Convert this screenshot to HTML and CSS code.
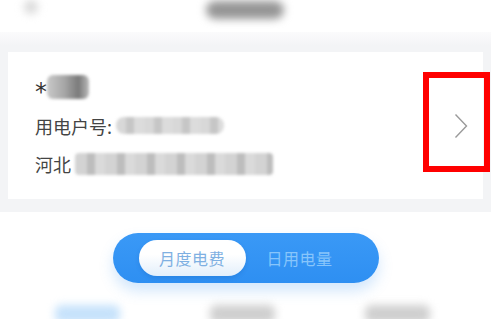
FILE: index.html
```html
<!DOCTYPE html>
<html lang="zh">
<head>
<meta charset="utf-8">
<link rel="stylesheet" href="styles.css">
</head>
<body>
<div class="page">
  <header class="topbar">
    <span class="back blur"></span>
    <span class="title blur"></span>
  </header>
  <section class="graybg">
    <div class="card">
      <div class="info">
        <div class="row"><span class="txt star">*</span><span class="mask m-name"></span></div>
        <div class="row"><span class="txt">用电户号:</span><span class="mask m-no"></span></div>
        <div class="row"><span class="txt">河北</span><span class="mask m-addr"></span></div>
      </div>
      <svg class="chev" width="14" height="26" viewBox="0 0 14 26"><path d="M1.5 1.5 L12.5 13 L1.5 24.5" fill="none" stroke="#9a9a9a" stroke-width="1.4"/></svg>
    </div>
    <div class="redbox"></div>
  </section>
  <section class="toggle-wrap">
    <div class="toggle">
      <span class="opt active">月度电费</span>
      <span class="opt">日用电量</span>
    </div>
  </section>
  <nav class="tabs">
    <span class="tab blue blur"></span>
    <span class="tab gray blur"></span>
    <span class="tab gray blur"></span>
  </nav>
</div>
</body>
</html>
```
FILE: styles.css
```css
html, body { margin: 0; padding: 0; background: #fff; }
body { width: 491px; height: 319px; overflow: hidden; font-family: "Noto Sans CJK SC", "Noto Sans", sans-serif; }
.page { position: relative; width: 491px; height: 319px; }
.topbar { height: 32px; position: relative; background: #fff; }
.blur { filter: blur(4px); }
.back { position: absolute; left: 24px; top: 0; width: 14px; height: 14px; background: #d8d8d8; border-radius: 7px; }
.title { position: absolute; left: 206px; top: 1px; width: 78px; height: 18px; background: #959595; border-radius: 9px; }
.graybg { position: relative; background: linear-gradient(#fbfbfc 0, #f3f4f6 14px, #f3f4f6 100%); padding: 20px 8px 13px; }
.card { background: #fff; height: 147px; display: flex; align-items: center; justify-content: space-between; padding: 0 15px 0 27px; box-sizing: border-box; }
.info { display: flex; flex-direction: column; }
.row { height: 38.5px; display: flex; align-items: center; color: #444; font-size: 18px; }
.star { font-family: "DejaVu Sans", sans-serif; font-size: 24px; line-height: 1; margin-top: 10px; color: #333; }
.mask { display: inline-block; height: 17px; border-radius: 8px; filter: blur(1.5px); margin-left: 4px; }
.m-name { width: 42px; height: 24px; background: linear-gradient(90deg, #c8c8c8, #a8a8a8 40%, #7a7a7a 75%, #bbb); border-radius: 6px; margin-left: 0; }
.m-no { width: 108px; background: repeating-linear-gradient(90deg, #d8d8d8 0 10px, #c6c6c6 10px 18px, #dcdcdc 18px 28px); }
.m-addr { width: 198px; height: 22px; border-radius: 4px; background: repeating-linear-gradient(90deg, #d3d3d3 0 12px, #bdbdbd 12px 20px, #dadada 20px 30px); }
.chev { margin-top: 1px; }
.redbox { position: absolute; left: 423px; top: 40px; width: 55px; height: 88px; border: 6px solid #ff0000; }
.toggle-wrap { display: flex; justify-content: center; padding-top: 21px; }
.toggle { width: 266px; height: 50px; border-radius: 25px; background: linear-gradient(#3a99f6, #2e8ff2); box-shadow: 0 8px 14px rgba(80, 160, 245, 0.25); display: flex; align-items: center; padding-left: 26px; box-sizing: border-box; gap: 21px; }
.opt { font-size: 16px; color: #87c5fb; letter-spacing: 0.5px; }
.opt.active { width: 107px; height: 36px; border-radius: 18px; background: linear-gradient(#ffffff 40%, #e3effb); color: #7fb0e2; display: flex; align-items: center; justify-content: center; box-shadow: 0 2px 4px rgba(0, 60, 140, 0.15); }
.tabs { display: flex; justify-content: space-between; padding: 22px 61px 0 55px; }
.tab { width: 65px; height: 18px; border-radius: 6px; }
.tab.blue { background: #c6e2fb; }
.tab.gray { background: #cfcfcf; }
```
